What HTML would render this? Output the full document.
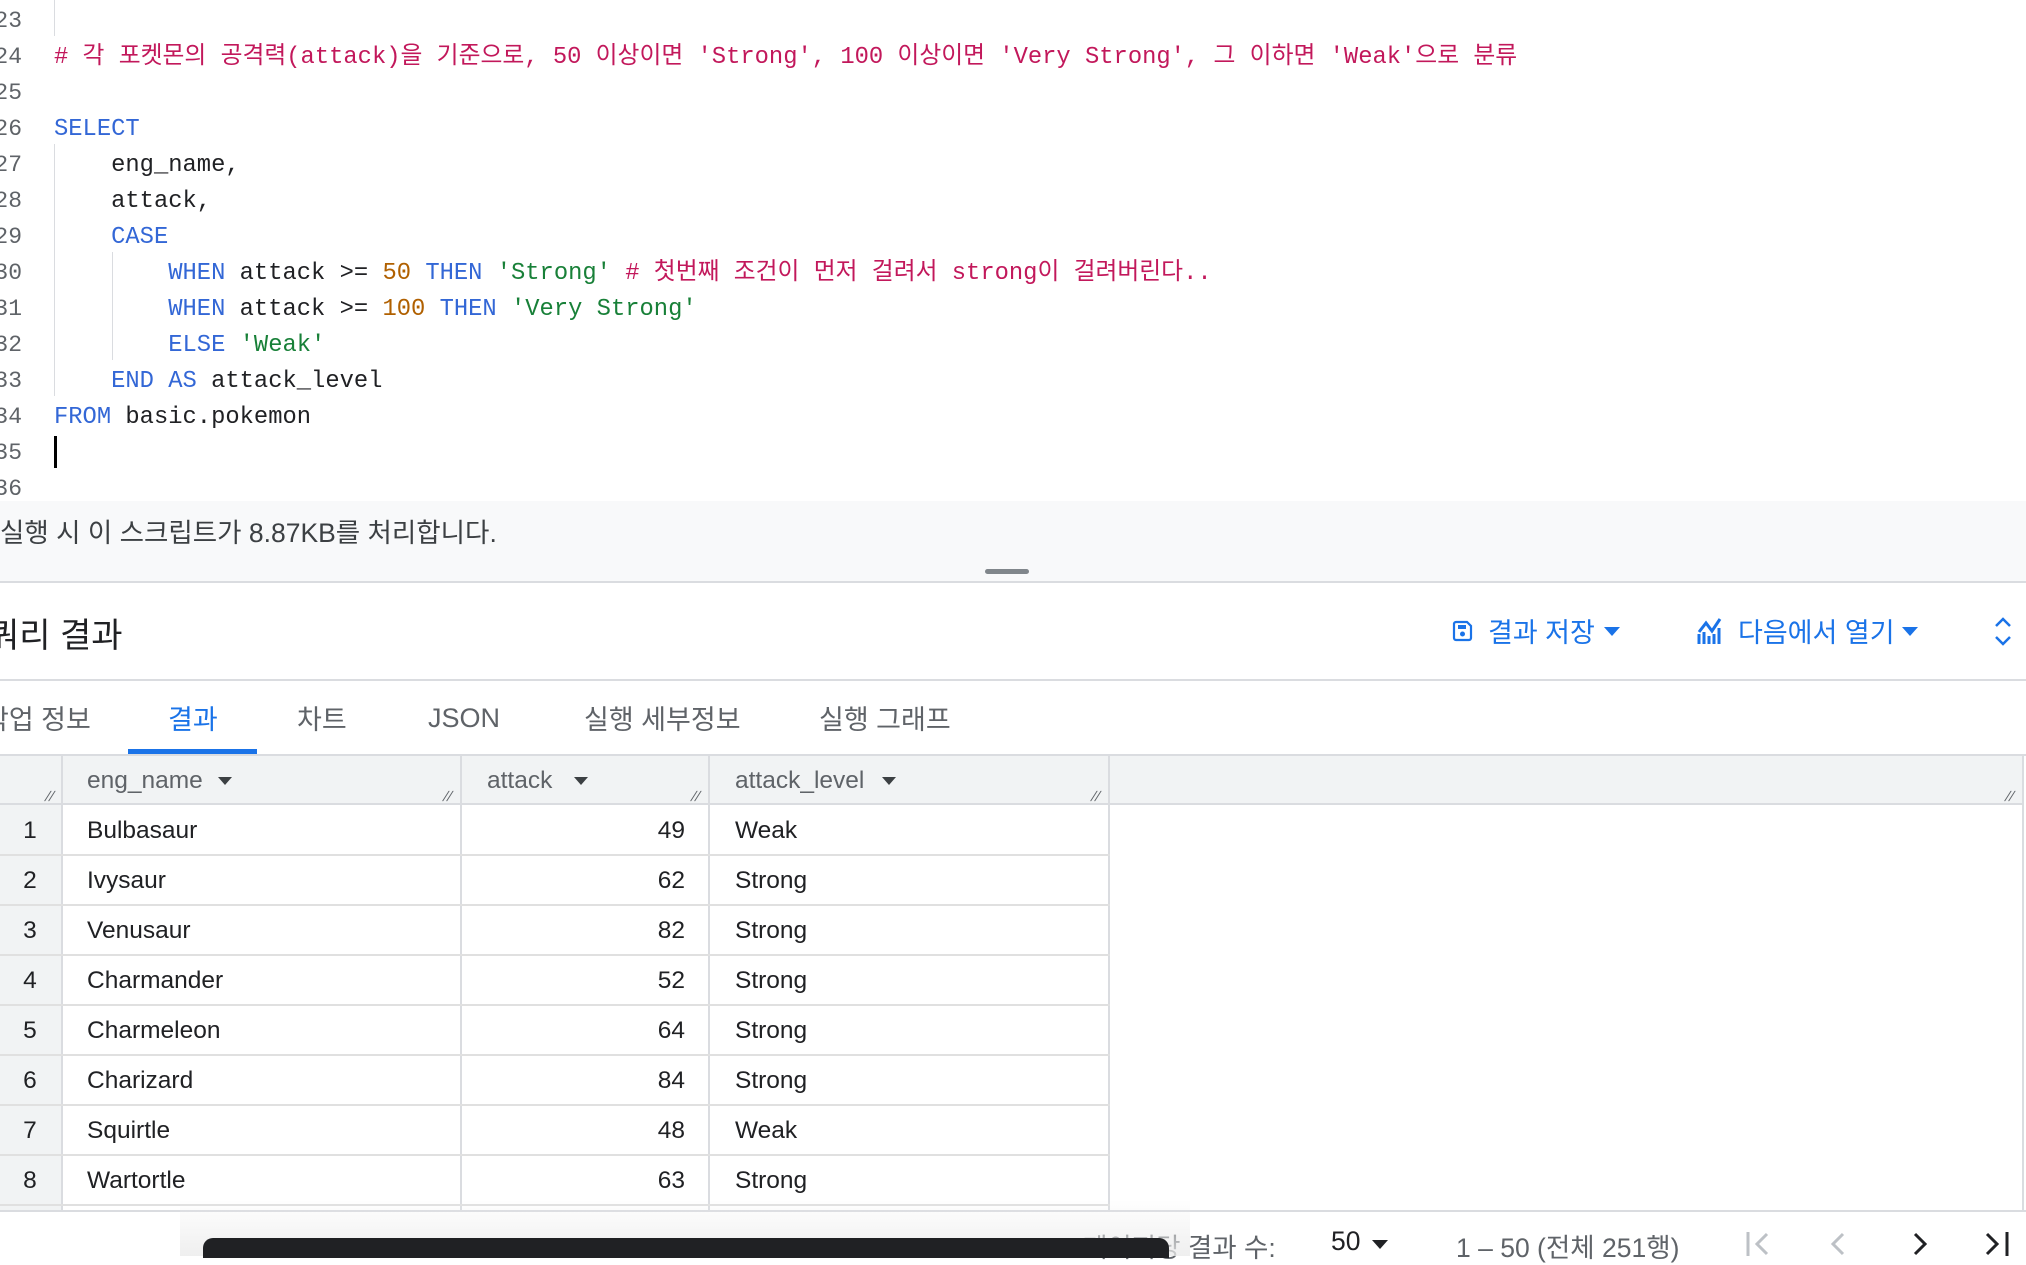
<!DOCTYPE html>
<html><head><meta charset="utf-8"><style>
*{margin:0;padding:0;box-sizing:border-box}
body{width:2026px;height:1256px;overflow:hidden;background:#fff;position:relative;font-family:"Liberation Sans","Noto Sans CJK KR",sans-serif;color:#202124}
.a{position:absolute;white-space:pre}
.code{font-family:"Liberation Mono","Noto Sans CJK KR",monospace;font-size:23.8px;line-height:36px;color:#202124}
.ln{position:absolute;left:-8px;width:30px;text-align:right;font-family:"Liberation Mono",monospace;font-size:23px;color:#5f6368}
.k{color:#3367d6}.c{color:#c2185b}.n{color:#b06000}.s{color:#188038}
.guide{position:absolute;width:1px;background:#dadce0}
.tab{position:absolute;top:698px;font-size:27px;color:#5f6368}
.hdr{position:absolute;top:756px;height:49px;background:#f1f3f4;border-bottom:2px solid #dadce0}
.vl{position:absolute;width:2px;background:#dadce0}
.hl{position:absolute;height:2px;background:#e0e0e0}
.cell{position:absolute;font-size:24.5px;color:#202124;line-height:50px}
.h{position:absolute;font-size:24.5px;color:#5f6368;top:767px}
.rs{position:absolute;top:788px;font-size:14px;color:#5f6368;transform:skewX(-20deg)}
.blue{color:#1a73e8}
</style></head><body>
<div class="guide" style="left:54px;top:0;height:36px"></div>
<div class="guide" style="left:54px;top:144px;height:252px"></div>
<div class="guide" style="left:112px;top:252px;height:108px"></div>
<div class="code a" style="left:0;top:2px">
<div class="ln" style="top:1px">23</div><div class="ln" style="top:37px">24</div><div class="ln" style="top:73px">25</div><div class="ln" style="top:109px">26</div><div class="ln" style="top:145px">27</div><div class="ln" style="top:181px">28</div><div class="ln" style="top:217px">29</div><div class="ln" style="top:253px">30</div><div class="ln" style="top:289px">31</div><div class="ln" style="top:325px">32</div><div class="ln" style="top:361px">33</div><div class="ln" style="top:397px">34</div><div class="ln" style="top:433px">35</div><div class="ln" style="top:469px">36</div>
</div>
<div class="code a" style="left:54px;top:40px"><span class="c"># 각 포켓몬의 공격력(attack)을 기준으로, 50 이상이면 'Strong', 100 이상이면 'Very Strong', 그 이하면 'Weak'으로 분류</span></div>
<div class="code a" style="left:54px;top:112px"><span class="k">SELECT</span></div>
<div class="code a" style="left:54px;top:148px">    eng_name,</div>
<div class="code a" style="left:54px;top:184px">    attack,</div>
<div class="code a" style="left:54px;top:220px">    <span class="k">CASE</span></div>
<div class="code a" style="left:54px;top:256px">        <span class="k">WHEN</span> attack &gt;= <span class="n">50</span> <span class="k">THEN</span> <span class="s">'Strong'</span> <span class="c"># 첫번째 조건이 먼저 걸려서 strong이 걸려버린다..</span></div>
<div class="code a" style="left:54px;top:292px">        <span class="k">WHEN</span> attack &gt;= <span class="n">100</span> <span class="k">THEN</span> <span class="s">'Very Strong'</span></div>
<div class="code a" style="left:54px;top:328px">        <span class="k">ELSE</span> <span class="s">'Weak'</span></div>
<div class="code a" style="left:54px;top:364px">    <span class="k">END</span> <span class="k">AS</span> attack_level</div>
<div class="code a" style="left:54px;top:400px"><span class="k">FROM</span> basic.pokemon</div>
<div class="a" style="left:54px;top:436px;width:3px;height:32px;background:#000"></div>
<div class="a" style="left:0;top:501px;width:2026px;height:82px;background:#f8f9fa;border-bottom:2px solid #dadce0"></div>
<div class="a" style="left:0;top:511px;font-size:26.5px;color:#3c4043">실행 시 이 스크립트가 8.87KB를 처리합니다.</div>
<div class="a" style="left:985px;top:569px;width:44px;height:5px;border-radius:3px;background:#80868b"></div>
<div class="a" style="left:-12px;top:608px;font-size:34px;color:#202124">쿼리 결과</div>
<svg class="a" style="left:1451px;top:619px" width="24" height="24" viewBox="0 0 24 24"><path d="M5 3h11l4 4v12a2 2 0 0 1-2 2H5a2 2 0 0 1-2-2V5a2 2 0 0 1 2-2z" fill="none" stroke="#1a73e8" stroke-width="2.2"/><rect x="7" y="6" width="8" height="4" fill="#1a73e8"/><circle cx="11.5" cy="15" r="2.5" fill="#1a73e8"/></svg>
<div class="a blue" style="left:1488px;top:611px;font-size:27px">결과 저장</div>
<div class="a" style="left:1604px;top:627px;width:0;height:0;border-left:8px solid transparent;border-right:8px solid transparent;border-top:9px solid #1a73e8"></div>
<svg class="a" style="left:1697px;top:616px" width="30" height="30" viewBox="0 0 30 30"><path d="M2 28V18M7 28V16M12 28V20M17 28V18M22 28V12" stroke="#1a73e8" stroke-width="3"/><path d="M2 16L9 7l6 8 8-12" fill="none" stroke="#1a73e8" stroke-width="3"/></svg>
<div class="a blue" style="left:1738px;top:611px;font-size:27px">다음에서 열기</div>
<div class="a" style="left:1902px;top:627px;width:0;height:0;border-left:8px solid transparent;border-right:8px solid transparent;border-top:9px solid #1a73e8"></div>
<svg class="a" style="left:1992px;top:614px" width="22" height="36" viewBox="0 0 22 36"><path d="M4 12l7-7 7 7M4 23l7 7 7-7" fill="none" stroke="#1a73e8" stroke-width="2.5"/></svg>
<div class="a" style="left:0;top:679px;width:2026px;height:2px;background:#dadce0"></div>
<div class="tab" style="left:-16px">작업 정보</div>
<div class="tab blue" style="left:168px">결과</div>
<div class="tab" style="left:297px">차트</div>
<div class="tab" style="left:428px;top:703px">JSON</div>
<div class="tab" style="left:584px">실행 세부정보</div>
<div class="tab" style="left:819px">실행 그래프</div>
<div class="a" style="left:128px;top:749px;width:129px;height:5px;background:#1a73e8"></div>
<div class="a" style="left:0;top:754px;width:2026px;height:2px;background:#dadce0"></div>
<div class="hdr" style="left:0;width:2023px"></div>
<div class="a" style="left:0;top:805px;width:62px;height:405px;background:#f1f3f4"></div>
<div class="vl" style="left:61px;top:756px;height:454px"></div>
<div class="vl" style="left:460px;top:756px;height:454px"></div>
<div class="vl" style="left:708px;top:756px;height:454px"></div>
<div class="vl" style="left:1108px;top:756px;height:454px"></div>
<div class="vl" style="left:2022px;top:756px;height:454px"></div>
<div class="h" style="left:87px">eng_name</div>
<div class="h" style="left:487px">attack</div>
<div class="h" style="left:735px">attack_level</div>
<div class="a" style="left:218px;top:777px;border-left:7px solid transparent;border-right:7px solid transparent;border-top:8px solid #3c4043"></div>
<div class="a" style="left:574px;top:777px;border-left:7px solid transparent;border-right:7px solid transparent;border-top:8px solid #3c4043"></div>
<div class="a" style="left:882px;top:777px;border-left:7px solid transparent;border-right:7px solid transparent;border-top:8px solid #3c4043"></div>
<div class="rs" style="left:46px">//</div><div class="rs" style="left:444px">//</div><div class="rs" style="left:692px">//</div><div class="rs" style="left:1092px">//</div><div class="rs" style="left:2006px">//</div>
<div class="cell" style="left:0;width:60px;text-align:center;top:806px">1<br>2<br>3<br>4<br>5<br>6<br>7<br>8</div>
<div class="cell" style="left:87px;top:806px">Bulbasaur<br>Ivysaur<br>Venusaur<br>Charmander<br>Charmeleon<br>Charizard<br>Squirtle<br>Wartortle</div>
<div class="cell" style="left:600px;width:85px;text-align:right;top:806px">49<br>62<br>82<br>52<br>64<br>84<br>48<br>63</div>
<div class="cell" style="left:735px;top:806px">Weak<br>Strong<br>Strong<br>Strong<br>Strong<br>Strong<br>Weak<br>Strong</div>
<div class="hl" style="left:0;width:1110px;top:854px"></div>
<div class="hl" style="left:0;width:1110px;top:904px"></div>
<div class="hl" style="left:0;width:1110px;top:954px"></div>
<div class="hl" style="left:0;width:1110px;top:1004px"></div>
<div class="hl" style="left:0;width:1110px;top:1054px"></div>
<div class="hl" style="left:0;width:1110px;top:1104px"></div>
<div class="hl" style="left:0;width:1110px;top:1154px"></div>
<div class="hl" style="left:0;width:1110px;top:1204px"></div>
<div class="a" style="left:0;top:1210px;width:2026px;height:2px;background:#dadce0"></div>
<div class="a" style="left:0;top:1212px;width:2026px;height:44px;background:#fff"></div>
<div class="a" style="left:1083px;top:1226px;font-size:26.5px;color:#5f6368">페이지당 결과 수:</div>
<div class="a" style="left:1331px;top:1226px;font-size:26.5px;color:#202124">50</div>
<div class="a" style="left:1372px;top:1240px;border-left:8px solid transparent;border-right:8px solid transparent;border-top:9px solid #202124"></div>
<div class="a" style="left:1456px;top:1226px;font-size:26.5px;color:#5f6368">1 – 50 (전체 251행)</div>
<svg class="a" style="left:1745px;top:1228px" width="290" height="30" viewBox="0 0 290 30"><path d="M3 4v24M22 6l-10 10 10 10" fill="none" stroke="#bdc1c6" stroke-width="3"/><path d="M98 6l-10 10 10 10" fill="none" stroke="#bdc1c6" stroke-width="3"/><path d="M170 6l10 10-10 10" fill="none" stroke="#202124" stroke-width="3"/><path d="M242 6l10 10-10 10M262 4v24" fill="none" stroke="#202124" stroke-width="3"/></svg>
<div class="a" style="left:180px;top:1200px;width:1010px;height:56px;background:linear-gradient(to bottom,rgba(240,240,240,0),rgba(235,235,235,.8))"></div>
<div class="a" style="left:203px;top:1238px;width:966px;height:20px;background:#202124;border-radius:10px 10px 0 0"></div>
</body></html>
